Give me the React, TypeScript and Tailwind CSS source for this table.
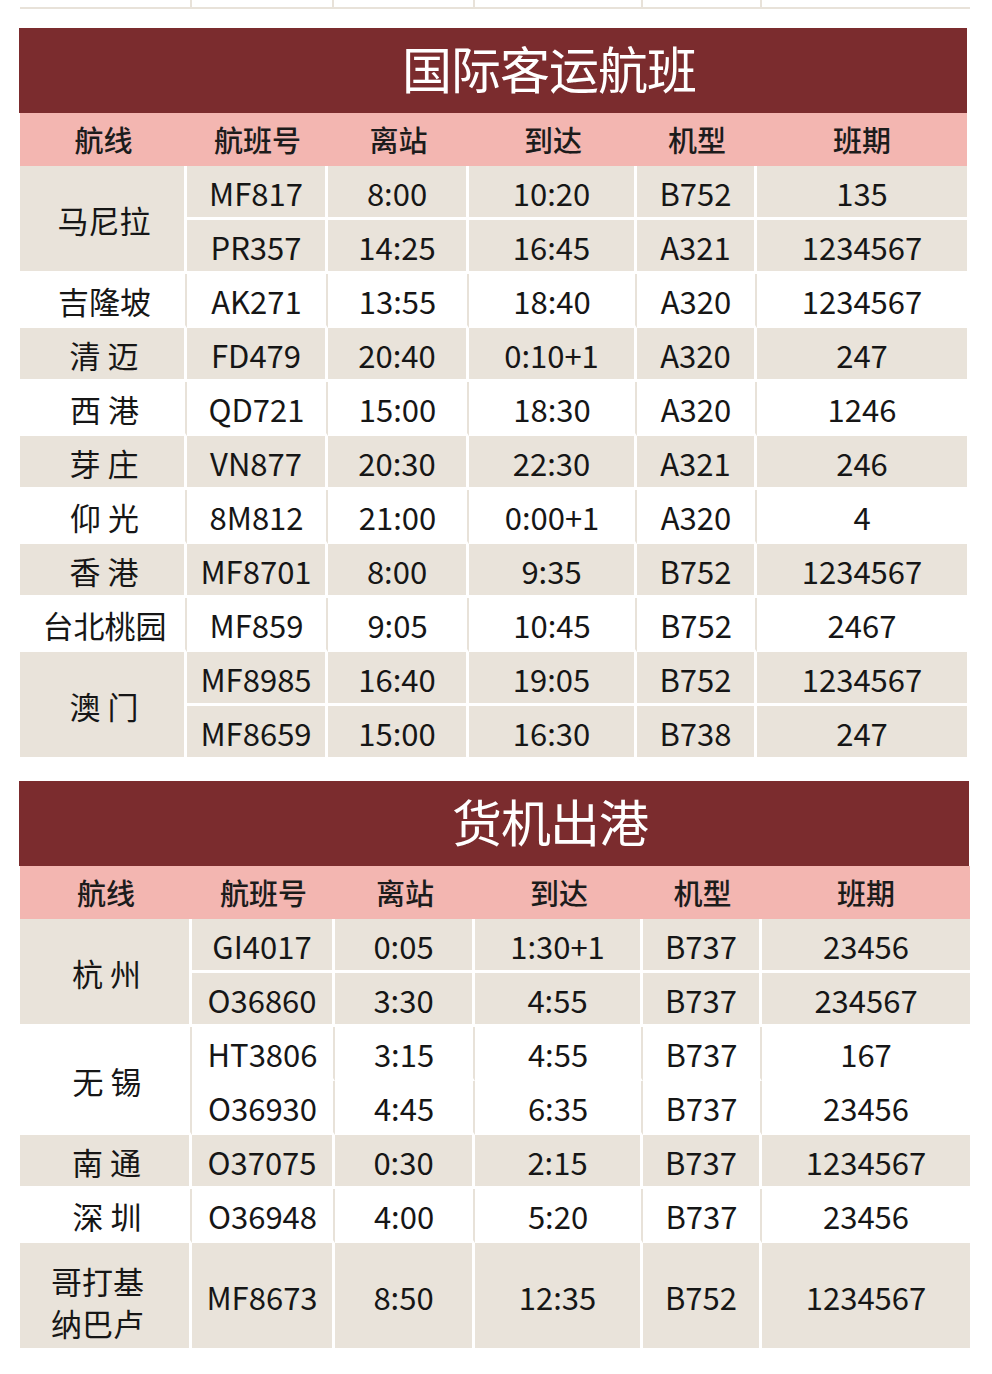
import React from 'react';

type Flight = [string, string, string, string, string];

interface RouteGroup {
  route: string[];
  flights: Flight[];
  shade: boolean;
  tall?: boolean;
}

const passenger: RouteGroup[] = [
  { route: ['马尼拉'], shade: true, flights: [['MF817', '8:00', '10:20', 'B752', '135'], ['PR357', '14:25', '16:45', 'A321', '1234567']] },
  { route: ['吉隆坡'], shade: false, flights: [['AK271', '13:55', '18:40', 'A320', '1234567']] },
  { route: ['清 迈'], shade: true, flights: [['FD479', '20:40', '0:10+1', 'A320', '247']] },
  { route: ['西 港'], shade: false, flights: [['QD721', '15:00', '18:30', 'A320', '1246']] },
  { route: ['芽 庄'], shade: true, flights: [['VN877', '20:30', '22:30', 'A321', '246']] },
  { route: ['仰 光'], shade: false, flights: [['8M812', '21:00', '0:00+1', 'A320', '4']] },
  { route: ['香 港'], shade: true, flights: [['MF8701', '8:00', '9:35', 'B752', '1234567']] },
  { route: ['台北桃园'], shade: false, flights: [['MF859', '9:05', '10:45', 'B752', '2467']] },
  { route: ['澳 门'], shade: true, flights: [['MF8985', '16:40', '19:05', 'B752', '1234567'], ['MF8659', '15:00', '16:30', 'B738', '247']] },
];

const cargo: RouteGroup[] = [
  { route: ['杭 州'], shade: true, flights: [['GI4017', '0:05', '1:30+1', 'B737', '23456'], ['O36860', '3:30', '4:55', 'B737', '234567']] },
  { route: ['无 锡'], shade: false, flights: [['HT3806', '3:15', '4:55', 'B737', '167'], ['O36930', '4:45', '6:35', 'B737', '23456']] },
  { route: ['南 通'], shade: true, flights: [['O37075', '0:30', '2:15', 'B737', '1234567']] },
  { route: ['深 圳'], shade: false, flights: [['O36948', '4:00', '5:20', 'B737', '23456']] },
  { route: ['哥打基', '纳巴卢'], shade: true, tall: true, flights: [['MF8673', '8:50', '12:35', 'B752', '1234567']] },
];

const headers = ['航线', '航班号', '离站', '到达', '机型', '班期'];

const font = { fontFamily: '"Noto Sans CJK SC", "Noto Sans", sans-serif' };

const Cell: React.FC<{ shade: boolean; last?: boolean; span?: boolean; children: React.ReactNode }> = ({ shade, last, span, children }) => {
  const base = 'flex items-center justify-center pt-[3px] border-b-[3px] border-white';
  const color = shade
    ? `bg-[#e9e3da] ${last ? '' : 'border-r-[3px] border-r-white'}`
    : `bg-white ${last ? '' : 'border-r-2 border-r-[#e8e2d9]'}`;
  return <div className={`${base} ${color} ${span ? 'row-span-2' : ''}`}>{children}</div>;
};

const Section: React.FC<{ title: string; groups: RouteGroup[]; cols: string; width: string; headWidth: string }> = ({ title, groups, cols, width, headWidth }) => (
  <div>
    <div className={`${headWidth} ml-[19px] h-[85px] bg-[#7b2c2e] flex items-center justify-center pl-[112px] pb-[8px]`}>
      <span className="text-white text-[50px] font-normal leading-none tracking-[-1px]">{title}</span>
    </div>
    <div className={`${width} ml-[20px] h-[53px] bg-[#f3b6b1] grid ${cols} items-center`}>
      {headers.map((h) => (
        <div key={h} className="text-center text-[29px] font-medium text-[#1c1c1c]">{h}</div>
      ))}
    </div>
    <div className={`${width} ml-[20px] grid ${cols} auto-rows-[54px] text-[31px] font-normal text-[#161616]`}>
      {groups.map((g, gi) => {
        const span = g.flights.length > 1 || !!g.tall;
        return (
          <React.Fragment key={gi}>
            <Cell shade={g.shade} span={span}>
              <div className={`text-center ${g.route.length > 1 ? 'leading-[42px] pr-[14px] pt-[10px]' : 'pl-[4px]'}`}>
                {g.route.map((r) => (
                  <div key={r} className="whitespace-pre">{r}</div>
                ))}
              </div>
            </Cell>
            {g.flights.map((f, fi) => (
              <React.Fragment key={fi}>
                {f.map((v, vi) => (
                  <Cell key={vi} shade={g.shade} last={vi === 4} span={!!g.tall}>
                    {v}
                  </Cell>
                ))}
              </React.Fragment>
            ))}
          </React.Fragment>
        );
      })}
    </div>
  </div>
);

const App: React.FC = () => {
  return (
    <div className="w-[992px] h-[1374px] bg-white overflow-hidden" style={font}>
      <div className="ml-[20px] w-[950px] h-[9px] grid grid-cols-[172px_142px_141px_168px_119px_208px] border-b-2 border-[#e8e2d9]">
        {[0, 1, 2, 3, 4, 5].map((i) => (
          <div key={i} className={i < 5 ? 'border-r-2 border-[#e8e2d9]' : ''} />
        ))}
      </div>
      <div className="mt-[19px]">
        <Section
          title="国际客运航班"
          groups={passenger}
          cols="grid-cols-[167px_141px_141px_168px_120px_210px]"
          width="w-[947px]"
          headWidth="w-[948px]"
        />
      </div>
      <div className="mt-[21px]">
        <Section
          title="货机出港"
          groups={cargo}
          cols="grid-cols-[172px_143px_140px_168px_119px_208px]"
          width="w-[950px]"
          headWidth="w-[950px]"
        />
      </div>
    </div>
  );
};

export default App;
